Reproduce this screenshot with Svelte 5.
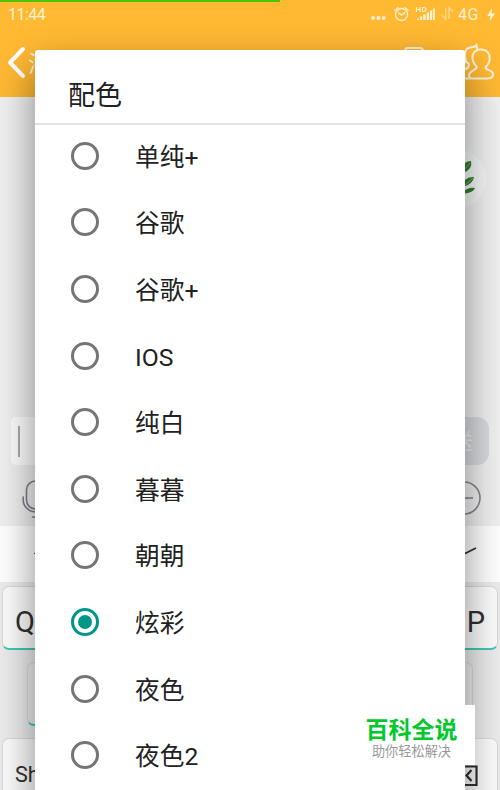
<script>
  const schemes = ['单纯+', '谷歌', '谷歌+', 'IOS', '纯白', '暮暮', '朝朝', '炫彩', '夜色', '夜色2'];
  let selected = $state('炫彩');
</script>

<div class="screen">
  <header>
    <div class="progress"><i></i></div>
    <div class="status">
      <span class="clock">11:44</span>
      <svg class="indicators" width="74" height="24" viewBox="0 0 74 24" fill="none" stroke="#fff0d0" stroke-width="1.4" stroke-linecap="round">
        <g fill="#fff0d0" stroke="none">
          <circle cx="3" cy="15" r="2" /><circle cx="8.4" cy="15" r="2" /><circle cx="13.8" cy="15" r="2" />
          <path d="M47 17h2v-1.5h-2zM50 17h2.2v-3.5H50zM53.200 17h2.4V11.5h-2.4zM56.700 17h2.4V9.500h-2.4zM60 17h2.200V7.500H60zM63 17h2V5.500h-2z" />
        </g>
        <circle cx="31.5" cy="11.5" r="6" />
        <path d="M29 10.2l2.5 2 3-2.4M25 7.3l3-2.6M35 4.7l3 2.6" />
        <path d="M46.500 4.500v4M50 4.500v4M46.500 6.500H50M52.500 4.500v4h1q2.500-.2 2.500-2t-2.500-2z" stroke-width="1.200" />
      </svg>
      <svg class="transfer" width="13" height="16" viewBox="0 0 13 16" fill="none" stroke="#ffd98e" stroke-width="1.4">
        <path d="M4.7 2v11L1 9.5M8 13V2l3.7 3.5" />
      </svg>
      <span class="network">4G</span>
      <svg class="bolt" width="8" height="14" viewBox="0 0 8 14" fill="#fff3dc"><path d="M5 0L.3 8h3L2.5 13.5 7.8 5.5H4.5z" /></svg>
    </div>
    <nav>
      <svg class="back" width="20" height="34" viewBox="0 0 20 34" fill="none" stroke="#fff" stroke-width="4" stroke-linecap="round" stroke-linejoin="round"><path d="M17 3L4 16.500 17 30" /></svg>
      <span class="chat-name">海</span>
      <svg class="card" width="20" height="24" viewBox="0 0 20 24" fill="none" stroke="#ffefd0" stroke-width="2"><rect x="1" y="1" width="18" height="22" rx="3" /></svg>
      <svg class="people" width="36" height="38" viewBox="0 0 36 38" fill="none" stroke="#fff3dd" stroke-width="2" stroke-linecap="round" stroke-linejoin="round">
        <path d="M6 18C4 10 5 5 10 4.500q3.500-.2 6-1.500l.5-1.500.8 4M5 19c5 0 5 5 1 7M2 35.500h8" />
        <path d="M21 6.500c-6 0-9 4-8.500 9 .2 4 2 6 4.500 8.500-.500 3-8 3.500-8 8.500 0 2 1.500 3 3.500 3h15c5 0 7-4 4.500-6.500-2.500-2.300-6.500-2-6.500-5 2.500-2 4-4.500 4.200-8.500.3-5-2.700-9-8.700-9z" />
      </svg>
    </nav>
  </header>

  <main>
    <div class="avatar">
      <svg width="60" height="60" viewBox="0 0 60 60">
        <g fill="#347d32"><path d="M35 24Q36 12 45 12 47 20 37 24z" /><path d="M35 39Q38 27 48 28 47 35 37 38z" /><path d="M35 44Q42 38 49 39 48 44 35 45z" /></g>
        <path d="M37 22L44 14M38 37l9-8" stroke="#7db56b" stroke-width="1" />
      </svg>
    </div>
  </main>

  <div class="composer">
    <div class="entry"><i></i></div>
    <div class="send">发送</div>
  </div>
  <div class="tools">
    <svg width="34" height="42" viewBox="0 0 34 42" fill="none" stroke="#7f7f88" stroke-width="1.6" stroke-linecap="round">
      <rect x="4.500" y="1" width="20" height="28" rx="9" /><path d="M1.200 17v3c0 7 6 12 13.300 12s13.500-5 13.500-12v-3M10.500 37h9" />
    </svg>
    <svg width="34" height="34" viewBox="0 0 34 34" fill="none" stroke="#85858e" stroke-width="1.600"><circle cx="16" cy="17" r="16" /><path d="M9 17h16" /></svg>
  </div>
  <div class="candidates">
    <svg width="10" height="4" viewBox="0 0 10 4"><path d="M0 1.500h8" stroke="#555" stroke-width="1.300" /></svg>
    <svg width="28" height="14" viewBox="0 0 28 14" fill="none" stroke="#333" stroke-width="1.800"><path d="M1 2l13 6 12-6" /></svg>
  </div>

  <section class="keyboard">
    <div class="keys top"><b>Q</b><b>P</b></div>
    <div class="keys middle"></div>
    <div class="keys bottom">
      <b>Sh</b>
      <svg width="32" height="24" viewBox="0 0 32 24" fill="none" stroke="#303030" stroke-width="2.200"><path d="M9 2.500h20.500v18.500H9L1 11.500zM24.500 6l-5 5.500 5 5.500M11 6l5 5.500-5 5.500" /></svg>
    </div>
  </section>

  <div class="dialog" role="dialog" aria-label="配色">
    <h1>配色</h1>
    <div class="options" role="radiogroup">
      {#each schemes as scheme}
        <button role="radio" aria-checked={selected === scheme} onclick={() => (selected = scheme)}>
          <span class="radio" class:checked={selected === scheme}></span>
          <span class="label">{scheme}</span>
        </button>
      {/each}
    </div>
  </div>

  <div class="brand"><strong>百科全说</strong><span>助你轻松解决</span></div>
</div>

<style>
  :global(body) { margin: 0; }
  .screen { position: relative; width: 500px; height: 790px; overflow: hidden; display: flex; flex-direction: column; background: #f0f0f0; font-family: Roboto, "Noto Sans CJK SC", sans-serif; color: #212121; }
  .screen * { box-sizing: border-box; }
  svg { display: block; flex: none; }
  header { height: 97px; flex: none; background: #ffb933; }
  .progress { height: 3px; }
  .progress i { display: block; width: 280px; height: 2px; background: #4cc50a; }
  .status { height: 27px; display: flex; padding-left: 8px; color: #fff0d2; font-size: 16px; line-height: 24px; }
  .clock { width: 362px; flex: none; letter-spacing: -.5px; }
  .transfer { margin: 3px 0 0 -3px; }
  .network { width: 28px; margin-left: 4px; letter-spacing: .6px; }
  .bolt { margin-left: 1px; margin-top: 5px; }
  nav { height: 67px; display: flex; align-items: flex-start; padding-left: 6px; }
  .back { margin-top: 16px; }
  .chat-name { width: 376px; margin-left: 2px; margin-top: 18px; font-size: 23px; line-height: 33px; color: #fff0d2; }
  .card { margin-top: 17px; }
  .people { margin-left: 36px; margin-top: 13px; }
  main { height: 320px; flex: none; display: flex; justify-content: flex-end; padding: 52px 14px 0 0; }
  .avatar { width: 60px; height: 60px; border-radius: 50%; overflow: hidden; background: #f6f8f7; }
  .composer { height: 48px; flex: none; display: flex; padding: 0 11px; gap: 12px; }
  .entry { flex: 1; background: #fdfdfd; border-radius: 5px; padding: 9px 7px; }
  .entry i { display: block; width: 2px; height: 31px; background: #aaa; }
  .send { width: 77px; border-radius: 12px; background: #d9dadf; color: #eff0f2; font-size: 22px; line-height: 50px; text-align: right; padding-right: 16px; }
  .tools { height: 61px; flex: none; display: flex; justify-content: space-between; align-items: flex-start; padding: 15px 18px 0 22px; }
  .tools svg:last-child { margin-top: 1px; }
  .candidates { height: 56px; flex: none; background: #fff; display: flex; justify-content: space-between; padding: 20px 22px 0 34px; }
  .candidates svg:first-child { margin-top: 6px; }
  .keyboard { height: 208px; flex: none; background: #ececec; padding: 4px 2px; display: flex; flex-direction: column; gap: 12px; }
  .keys { flex: none; height: 64px; display: flex; justify-content: space-between; border: 1px solid #dadada; border-bottom: 2px solid #3fc9b6; border-radius: 7px; background: #fcfcfc; padding: 0 12px; }
  .keys b { font-weight: 400; color: #303030; font-size: 29px; line-height: 71px; }
  .middle { margin: 0 25px; background: #eee; }
  .keys.bottom b { font-size: 21.5px; line-height: 71px; }
  .bottom svg { margin: 25px 6px 0 0; }
  .dialog { position: absolute; left: 35px; top: 50px; width: 430px; height: 790px; background: #fff; border-radius: 3px 3px 0 0; box-shadow: 0 18px 40px rgba(0,0,0,.46); }
  h1 { margin: 0; height: 75px; padding: 9px 0 0 33px; border-bottom: 2px solid #e2e2e2; font-weight: 400; font-size: 27px; line-height: 75px; }
  .options { display: flex; flex-direction: column; margin-top: -2.8px; }
  button { height: 66.67px; flex: none; border: 0; background: none; padding: 0 0 0 36px; display: flex; align-items: center; font: inherit; color: inherit; text-align: left; }
  .radio { width: 28px; height: 28px; flex: none; border: 3px solid #757575; border-radius: 50%; display: flex; align-items: center; justify-content: center; }
  .checked { border-color: #009688; }
  .checked::after { content: ""; width: 14px; height: 14px; border-radius: 50%; background: #009688; }
  .label { margin-left: 36px; margin-top: 4px; font-size: 24.7px; line-height: 36px; }
  .brand { position: absolute; left: 350px; top: 705px; width: 125px; height: 60px; background: #fff; display: flex; flex-direction: column; align-items: center; padding: 10px 2px 0 0; }
  .brand strong { color: #00c82d; font-size: 23px; line-height: 31px; font-weight: 700; }
  .brand span { color: #999; font-size: 13.2px; line-height: 12px; }
</style>
